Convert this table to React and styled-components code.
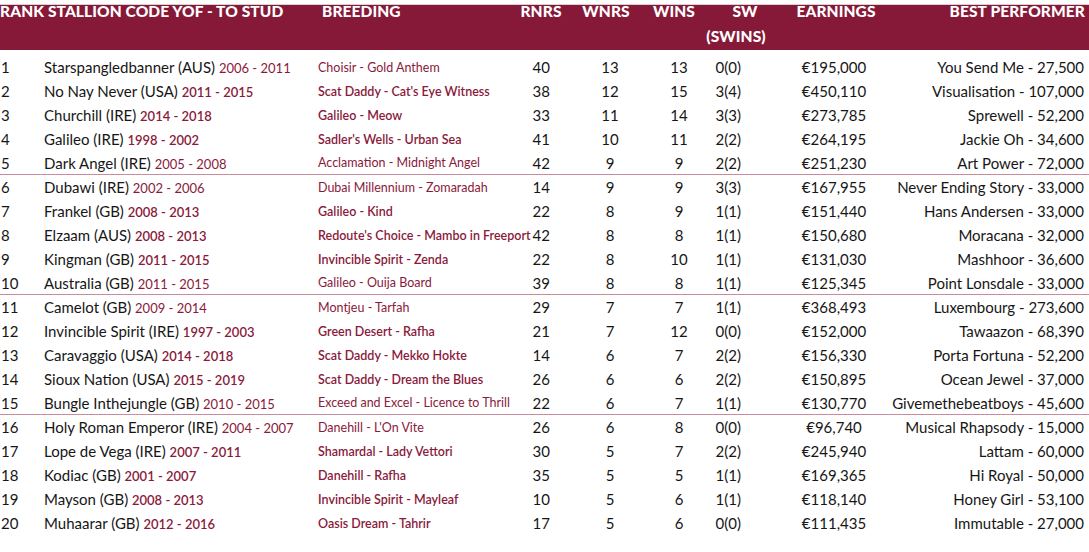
import React from "react";
import styled, { createGlobalStyle } from "styled-components";

const GlobalStyle = createGlobalStyle`
  html, body {
    margin: 0;
    padding: 0;
    background: #fff;
  }
  body {
    font-family: "Lato", "Liberation Sans", sans-serif;
    color: #161616;
  }
`;

const COLUMNS = "44px 274px 202px 50px 76px 66px 78px 88px 1fr";

const Table = styled.div`
  width: 1089px;
  padding-top: 4px;
`;

const HeaderRow = styled.div`
  display: grid;
  grid-template-columns: ${COLUMNS};
  height: 45px;
  border-top: 1px solid #d8d0d3;
  background: #861937;
  color: #fff;
  font-size: 15.5px;
  font-weight: 900;
  letter-spacing: 0.1px;
  line-height: 25px;
  text-transform: uppercase;
`;

const HeadCell = styled.div`
  margin-top: -6px;
  white-space: nowrap;
  text-align: ${(p) => p.$align || "left"};
  padding-right: ${(p) => p.$pr || 0}px;
  padding-left: ${(p) => p.$pl || 0}px;
`;

const StackedHead = styled(HeadCell)`
  display: flex;
  flex-direction: column;
  align-items: center;
`;

const SubLine = styled.span`
  padding-left: ${(p) => p.$shift || 0}px;
`;

const Body = styled.div`
  padding-top: 5px;
`;

const Row = styled.div`
  display: grid;
  grid-template-columns: ${COLUMNS};
  align-items: center;
  height: 24px;
  box-sizing: border-box;
  font-size: 15px;
  white-space: nowrap;
  border-bottom: ${(p) => (p.$divider ? "1px solid #c98c9d" : "none")};
`;

const Cell = styled.div`
  text-align: ${(p) => p.$align || "left"};
  padding-right: ${(p) => p.$pr || 0}px;
  padding-left: ${(p) => p.$pl || 0}px;
`;

const Rank = styled(Cell)`
  padding-left: 1px;
`;

const Years = styled.span`
  color: #8a1a3b;
  font-size: 13px;
  font-weight: ${(p) => (p.$light ? 400 : 600)};
`;

const Breeding = styled(Cell)`
  color: #8a1a3b;
  font-size: 12.5px;
  font-weight: ${(p) => (p.$light ? 400 : 600)};
`;

const rows = [
  ["Starspangledbanner (AUS)", "2006 - 2011", "Choisir - Gold Anthem", 40, 13, 13, "0(0)", "€195,000", "You Send Me - 27,500", true],
  ["No Nay Never (USA)", "2011 - 2015", "Scat Daddy - Cat's Eye Witness", 38, 12, 15, "3(4)", "€450,110", "Visualisation - 107,000", false],
  ["Churchill (IRE)", "2014 - 2018", "Galileo - Meow", 33, 11, 14, "3(3)", "€273,785", "Sprewell - 52,200", false],
  ["Galileo (IRE)", "1998 - 2002", "Sadler's Wells - Urban Sea", 41, 10, 11, "2(2)", "€264,195", "Jackie Oh - 34,600", false],
  ["Dark Angel (IRE)", "2005 - 2008", "Acclamation - Midnight Angel", 42, 9, 9, "2(2)", "€251,230", "Art Power - 72,000", true],
  ["Dubawi (IRE)", "2002 - 2006", "Dubai Millennium - Zomaradah", 14, 9, 9, "3(3)", "€167,955", "Never Ending Story - 33,000", true],
  ["Frankel (GB)", "2008 - 2013", "Galileo - Kind", 22, 8, 9, "1(1)", "€151,440", "Hans Andersen - 33,000", false],
  ["Elzaam (AUS)", "2008 - 2013", "Redoute's Choice - Mambo in Freeport", 42, 8, 8, "1(1)", "€150,680", "Moracana - 32,000", false],
  ["Kingman (GB)", "2011 - 2015", "Invincible Spirit - Zenda", 22, 8, 10, "1(1)", "€131,030", "Mashhoor - 36,600", false],
  ["Australia (GB)", "2011 - 2015", "Galileo - Ouija Board", 39, 8, 8, "1(1)", "€125,345", "Point Lonsdale - 33,000", true],
  ["Camelot (GB)", "2009 - 2014", "Montjeu - Tarfah", 29, 7, 7, "1(1)", "€368,493", "Luxembourg - 273,600", true],
  ["Invincible Spirit (IRE)", "1997 - 2003", "Green Desert - Rafha", 21, 7, 12, "0(0)", "€152,000", "Tawaazon - 68,390", false],
  ["Caravaggio (USA)", "2014 - 2018", "Scat Daddy - Mekko Hokte", 14, 6, 7, "2(2)", "€156,330", "Porta Fortuna - 52,200", false],
  ["Sioux Nation (USA)", "2015 - 2019", "Scat Daddy - Dream the Blues", 26, 6, 6, "2(2)", "€150,895", "Ocean Jewel - 37,000", false],
  ["Bungle Inthejungle (GB)", "2010 - 2015", "Exceed and Excel - Licence to Thrill", 22, 6, 7, "1(1)", "€130,770", "Givemethebeatboys - 45,600", true],
  ["Holy Roman Emperor (IRE)", "2004 - 2007", "Danehill - L'On Vite", 26, 6, 8, "0(0)", "€96,740", "Musical Rhapsody - 15,000", true],
  ["Lope de Vega (IRE)", "2007 - 2011", "Shamardal - Lady Vettori", 30, 5, 7, "2(2)", "€245,940", "Lattam - 60,000", false],
  ["Kodiac (GB)", "2001 - 2007", "Danehill - Rafha", 35, 5, 5, "1(1)", "€169,365", "Hi Royal - 50,000", false],
  ["Mayson (GB)", "2008 - 2013", "Invincible Spirit - Mayleaf", 10, 5, 6, "1(1)", "€118,140", "Honey Girl - 53,100", false],
  ["Muhaarar (GB)", "2012 - 2016", "Oasis Dream - Tahrir", 17, 5, 6, "0(0)", "€111,435", "Immutable - 27,000", false],
];

export default function App() {
  return (
    <>
      <GlobalStyle />
      <Table>
        <HeaderRow>
          <HeadCell style={{ gridColumn: "1 / 3" }}>Rank Stallion Code YOF - To Stud</HeadCell>
          <HeadCell $pl={4}>Breeding</HeadCell>
          <HeadCell $align="center" $pr={8}>Rnrs</HeadCell>
          <HeadCell $align="center" $pr={4}>Wnrs</HeadCell>
          <HeadCell $align="center" $pr={10}>Wins</HeadCell>
          <StackedHead $pr={30}>
            <SubLine $shift={18}>SW</SubLine>
            <SubLine>(Swins)</SubLine>
          </StackedHead>
          <HeadCell $align="center" $pl={4}>Earnings</HeadCell>
          <HeadCell $align="right" $pr={4}>Best Performer</HeadCell>
        </HeaderRow>
        <Body>
          {rows.map((r, i) => (
            <Row key={i} $divider={i === 4 || i === 9 || i === 14}>
              <Rank>{i + 1}</Rank>
              <Cell>
                {r[0]} <Years $light={r[9]}>{r[1]}</Years>
              </Cell>
              <Breeding $light={r[9]}>{r[2]}</Breeding>
              <Cell $align="right" $pr={20}>{r[3]}</Cell>
              <Cell $align="center" $pl={4}>{r[4]}</Cell>
              <Cell $align="center">{r[5]}</Cell>
              <Cell $align="right" $pr={49}>{r[6]}</Cell>
              <Cell $align="center">{r[7]}</Cell>
              <Cell $align="right" $pr={5}>{r[8]}</Cell>
            </Row>
          ))}
        </Body>
      </Table>
    </>
  );
}
